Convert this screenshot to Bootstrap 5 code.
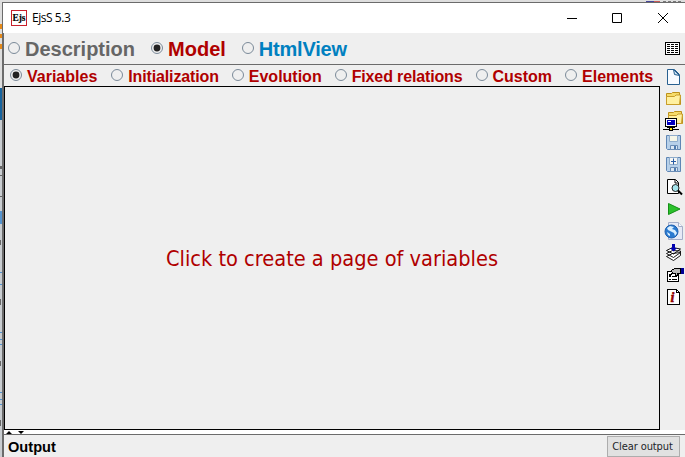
<!DOCTYPE html>
<html lang="en">
<head>
<meta charset="utf-8">
<meta name="viewport" content="width=device-width, initial-scale=1">
<title>EjsS 5.3</title>
<link href="https://cdn.jsdelivr.net/npm/bootstrap@5.3.0/dist/css/bootstrap.min.css" rel="stylesheet">
<style>
html,body{height:457px;overflow:hidden}
body{font-family:"Liberation Sans",Arial,sans-serif;background:#dedede;color:#000}
svg{display:block;flex:none}
.desktop{width:685px;height:457px}
.behind{width:2px}
.topstrip{height:2px;background:#dedede}
.win{border-left:2px solid #6b6b6b;border-top:1px solid #6b6b6b;background:#efefef;width:683px}
.titlebar{height:30px;background:#fff;margin-left:-1px;padding-left:8px}
.title-text{font:12px/16px "Open Sans",sans-serif;letter-spacing:-.45px;margin-left:5px;width:300px}
.caption-buttons{padding-right:16px}
.modes{height:32px;border-bottom:1px solid #6b6b6b;padding-left:5px;margin-left:-1px}
.choice{font-weight:700;white-space:nowrap;color:#b00000;gap:5px}
.modes .choice{font-size:20px;line-height:30px;margin-right:16px}
.modes .choice:nth-child(3){letter-spacing:-.2px}
.radio{width:12px;height:12px;border:1px solid #7b8a99;border-radius:50%;flex:none;padding:2px}
.radio.on::before{content:"";display:block;width:6px;height:6px;border-radius:50%;background:#222;box-shadow:0 0 0 .4px #222}
.modes .radio{margin-top:-2px}
.tabs{height:21px;padding-left:6px;gap:13px}
.tabs .choice{font-size:16px;line-height:21px}
.tabs .choice span{padding-top:1px}
.tabs .radio{margin-top:-1px}
.tabs .choice:nth-child(2){margin-left:1px;letter-spacing:-.14px}
.tabs .choice:nth-child(4){letter-spacing:-.14px}
.gray{color:#666}.blue{color:#0080c0}
.main-col{width:656px}
.canvas{height:344px;border:1px solid #000;color:#b00000}
.prompt{font:21.6px/28px "DejaVu Sans Condensed","DejaVu Sans",sans-serif;font-stretch:condensed;white-space:nowrap;padding-top:2px}
.tools{width:25px;padding:1px 0 0 2px}
.splitter{height:4px;background:#fff}
.output{border-top:1px solid #6b6b6b;height:23px;padding:0 5px 0 4px}
.output-title{font-size:14.6px;font-weight:700;line-height:22px;padding-top:2px}
.clear{width:73px;height:21px;border:1px solid #adadad;border-radius:0;background:#e1e1e1;font:11px/18px "DejaVu Sans Condensed","DejaVu Sans",sans-serif;font-stretch:condensed;letter-spacing:-.1px;white-space:nowrap;padding:1px 2px 0 0}
</style>
<script src="https://cdn.jsdelivr.net/npm/bootstrap@5.3.0/dist/js/bootstrap.bundle.min.js"></script>
</head>
<body>
<div class="desktop d-flex">
  <svg class="behind" width="2" height="457" shape-rendering="crispEdges"><path fill="#dedede" d="M0 0h2v457H0z"/><path fill="#e58a1a" d="M0 24h2v5H0zM0 34h2v4H0zM0 44h2v5H0z"/><path fill="#17649e" d="M0 88h2v32H0z"/><path fill="#c9cdd1" d="M0 120h2v337H0z"/><path fill="#5594cf" d="M0 211h2v13H0zM0 272h2v1H0zM0 284h2v1H0zM0 332h2v1H0zM0 339h2v1H0zM0 344h2v1H0zM0 392h2v1H0zM0 399h2v1H0zM0 404h2v1H0z"/><path fill="#666" d="M0 166h2v3H0zM0 175h2v1H0zM0 196h2v1H0zM0 240h1v5H0zM0 299h1v6H0zM0 361h1v5H0zM0 420h1v6H0z"/></svg>
  <div>
    <div class="topstrip d-flex justify-content-end"><svg width="40" height="2"><path fill="#45459a" d="M1 1h8v1H1z"/><path fill="#c85a55" d="M9 1h6v1H9z"/><path stroke="#777" stroke-dasharray="3 2" d="M18 1.5h18"/></svg></div>
    <div class="win">
      <header class="titlebar d-flex align-items-center">
        <svg width="16" height="16"><rect x=".5" y=".5" width="15" height="15" fill="#fff" stroke="#c8202c"/><text x="1.5" y="11" font-family="Liberation Serif,serif" font-size="11" font-weight="700" textLength="13" lengthAdjust="spacingAndGlyphs" stroke="#000" stroke-width=".2">Ejs</text></svg>
        <div class="title-text flex-grow-1">EjsS 5.3</div>
        <div class="caption-buttons d-flex">
          <svg width="102" height="12" stroke="#000" fill="none"><path d="M0 6.5h10M45.500 1.500h9v9h-9z"/><path d="M91 1l10 10M101 1L91 11"/></svg>
        </div>
      </header>
      <nav class="modes d-flex align-items-center">
        <div class="choice gray d-flex align-items-center"><i class="radio"></i><span>Description</span></div>
        <div class="choice d-flex align-items-center"><i class="radio on"></i><span>Model</span></div>
        <div class="choice blue d-flex align-items-center"><i class="radio"></i><span>HtmlView</span></div>
        <svg class="ms-auto" width="20" height="14" shape-rendering="crispEdges"><path fill="#fff" stroke="#000" d="M.5.500h14v12h-14z"/><path stroke="#000" stroke-dasharray="3 1" d="M2 2.500h11M2 4.500h11M2 6.500h11M2 8.500h11M2 10.500h11"/></svg>
      </nav>
      <div class="d-flex">
        <div class="main-col">
          <nav class="tabs d-flex align-items-center">
            <div class="choice d-flex align-items-center"><i class="radio on"></i><span>Variables</span></div>
            <div class="choice d-flex align-items-center"><i class="radio"></i><span>Initialization</span></div>
            <div class="choice d-flex align-items-center"><i class="radio"></i><span>Evolution</span></div>
            <div class="choice d-flex align-items-center"><i class="radio"></i><span>Fixed relations</span></div>
            <div class="choice d-flex align-items-center"><i class="radio"></i><span>Custom</span></div>
            <div class="choice d-flex align-items-center"><i class="radio"></i><span>Elements</span></div>
          </nav>
          <main class="canvas d-flex align-items-center justify-content-center"><span class="prompt">Click to create a page of variables</span></main>
        </div>
        <aside class="tools d-flex flex-column">
          <!-- new -->
          <svg width="23" height="22"><path fill="#f8fbff" stroke="#286090" d="M5.500 3.500h7l5 5v10h-12z"/><path fill="#c8e0f4" stroke="#286090" d="M11.500 3.500l1 5 5 1z"/></svg>
          <!-- open -->
          <svg width="23" height="22"><path fill="#f6dc6a" stroke="#bd911b" d="M4.500 16.500v-11h5l1-1h7v3h1v9z"/><path fill="#fff0a0" stroke="#c89d2a" d="M4.500 8.500h8l1.500-1.500h4.500l-1 9.500h-13z"/></svg>
          <!-- open from network -->
          <svg width="23" height="22"><path fill="#f6dc6a" stroke="#bd911b" d="M6.500 13.500v-11h5l1-1h7v3h1v9z"/><path fill="#fff0a0" stroke="#c89d2a" d="M6.500 5.500h8L16 4h4.500l-1 9.500h-13z"/><g shape-rendering="crispEdges"><path d="M3 8h12v9H3zM5 17h8v1H5z"/><path fill="#fff" d="M4 9h10v7H4z"/><path fill="#0000c0" d="M5 10h8v5H5z"/><path fill="#fff" d="M6 11h3v1H6z"/><path d="M1 19h6v1H1zM11 19h6v1h-6zM7 18h4v3H7z"/><path fill="#ffe700" d="M8 18h2v2H8z"/></g></svg>
          <!-- save -->
          <svg width="23" height="22"><path fill="#b7d0e9" stroke="#5f86b5" d="M4.500 3.500h14v14h-13l-1-1z"/><path fill="#f5f6e8" stroke="#90adcb" d="M7.500 3.500h8v6h-8z"/><path fill="#dce8f4" stroke="#6b8db5" d="M8.500 13.500h7v4h-7z"/><path fill="#4d7aae" d="M12 14h2v3h-2z"/></svg>
          <!-- save as -->
          <svg width="23" height="22"><path fill="#b7d0e9" stroke="#5f86b5" d="M4.500 3.500h14v14h-13l-1-1z"/><path fill="#f5f6f4" stroke="#90adcb" d="M7.500 3.500h8v7h-8z"/><path fill="#dce8f4" stroke="#6b8db5" d="M8.500 13.500h7v4h-7z"/><path fill="#4d7aae" d="M12 14h2v3h-2z"/><path stroke="#285ca4" d="M11.500 4.500v6M9 7.500h5"/></svg>
          <!-- search -->
          <svg width="23" height="22"><path fill="#fff" stroke="#000" d="M5.500 3.500h8l3 3v11h-11z"/><path fill="none" stroke="#000" d="M13 4v3h3"/><circle cx="13.500" cy="12" r="3.500" fill="#a5e5ed" stroke="#222"/><path stroke="#000" stroke-width="2" d="M16 14.500l4 4"/></svg>
          <!-- run -->
          <svg width="23" height="22"><path fill="#2bc12b" stroke="#159018" d="M6.500 5.500v11l11.500-5.500z"/></svg>
          <!-- web page -->
          <svg width="23" height="22"><path fill="#e6eaf6" stroke="#a4aec8" d="M6.500 2.500h10l4 4v13h-14z"/><path fill="#f8faff" stroke="#a4aec8" d="M16.500 2.500v4h4"/><circle cx="9.500" cy="11.500" r="6.500" fill="#2a7ad0" stroke="#1c5fae"/><path fill="#d9efff" d="M5 8l3-2 4 1-2 2 3 1 2 3-2 3-1-3-4-2-2-1zM5 12l3 2v2l-2-1z"/></svg>
          <!-- package -->
          <svg width="23" height="22"><path fill="#fff" stroke="#000" stroke-width=".9" d="M4.500 14.500l6-3 8-1v3l-7 5zM4.500 11.500l6-3 8 .5v1.500l-7 5zM4.500 8.500l6-3 8 1.500-7 5z"/><path fill="#0000b0" d="M10 2h3v4h2l-3.500 3.500L8 6h2z"/></svg>
          <!-- options -->
          <svg width="23" height="22" shape-rendering="crispEdges"><path fill="#fff" stroke="#000" d="M5.500 7.500h11v10h-11z"/><path stroke="#000" d="M7 12.500h2M10 12.500h5M7 15.500h2M10 15.500h5M7 10.500l1 1 2-2"/><path fill="#bbb" stroke="#000" d="M9.500 6.500l3-2h6v5h-3v2h-2v-2h-3z"/><path fill="#000096" d="M19 4h3v6h-3z"/></svg>
          <!-- info -->
          <svg width="23" height="22"><g shape-rendering="crispEdges"><path fill="#fff" stroke="#000" d="M5.500 3.500h9l3 3v12h-12z"/><path fill="none" stroke="#000" d="M14.500 4v2.500h3"/></g><text x="8.500" y="16" font-family="Liberation Serif,serif" font-size="14" font-style="italic" font-weight="700" fill="#900000" stroke="#900000" stroke-width=".5">i</text></svg>
        </aside>
      </div>
      <div class="splitter"><svg width="24" height="4"><path d="M2 4l3-3 3 3zM14 1h6l-3 3z"/></svg></div>
      <footer class="output d-flex align-items-center justify-content-between">
        <span class="output-title">Output</span>
        <button class="btn clear">Clear output</button>
      </footer>
    </div>
  </div>
</div>
</body>
</html>
